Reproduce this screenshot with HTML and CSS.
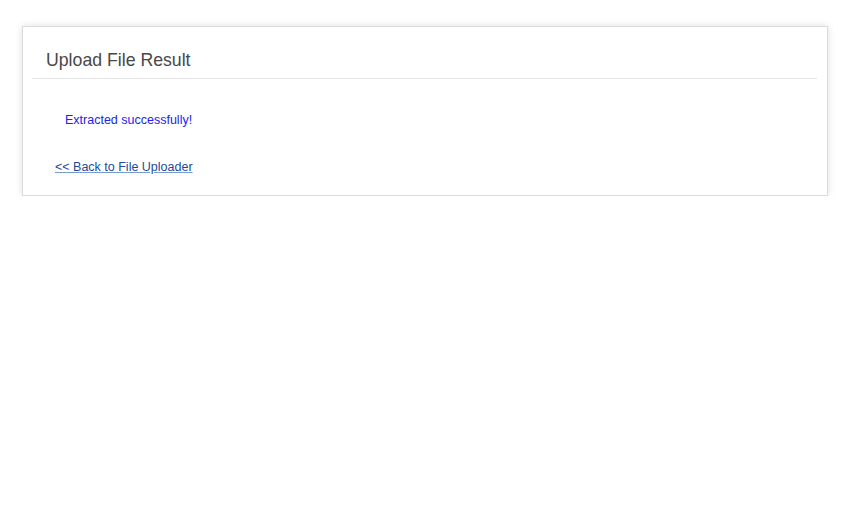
FILE: index.html
```html
<!DOCTYPE html>
<html>
<head>
<meta charset="utf-8">
<link rel="stylesheet" href="styles.css">
</head>
<body>
<div class="card">
  <div class="card-header"><h2 class="title">Upload File Result</h2></div>
  <div class="card-body">
    <p class="message">Extracted successfully!</p>
    <a class="back" href="#">&lt;&lt; Back to File Uploader</a>
  </div>
</div>
</body>
</html>
```
FILE: styles.css
```css
html, body { background: #fff; }
body {
  margin: 0;
  padding: 26px 22px 0;
  font-family: "Liberation Sans", Arial, sans-serif;
}
.card {
  border: 1px solid #dcdcdc;
  box-shadow: 0 0 7px rgba(0,0,0,0.13);
  background: #fff;
  padding: 0 10px 0 9px;
}
.card-header {
  border-bottom: 1px solid #e6e6e6;
  padding: 22px 14px 6px;
}
.title {
  margin: 0;
  font-size: 17.7px;
  font-weight: normal;
  color: #484848;
  line-height: 23px;
}
.card-body {
  padding: 34px 0 20px 23px;
}
.message {
  margin: 0 0 29px 10px;
  font-size: 12.5px;
  line-height: 15px;
  color: #2222f0;
}
.back {
  font-size: 12.5px;
  line-height: 15px;
  color: #1c4a9c;
  text-decoration: underline;
  text-decoration-color: #7a9ad4;
}
```
